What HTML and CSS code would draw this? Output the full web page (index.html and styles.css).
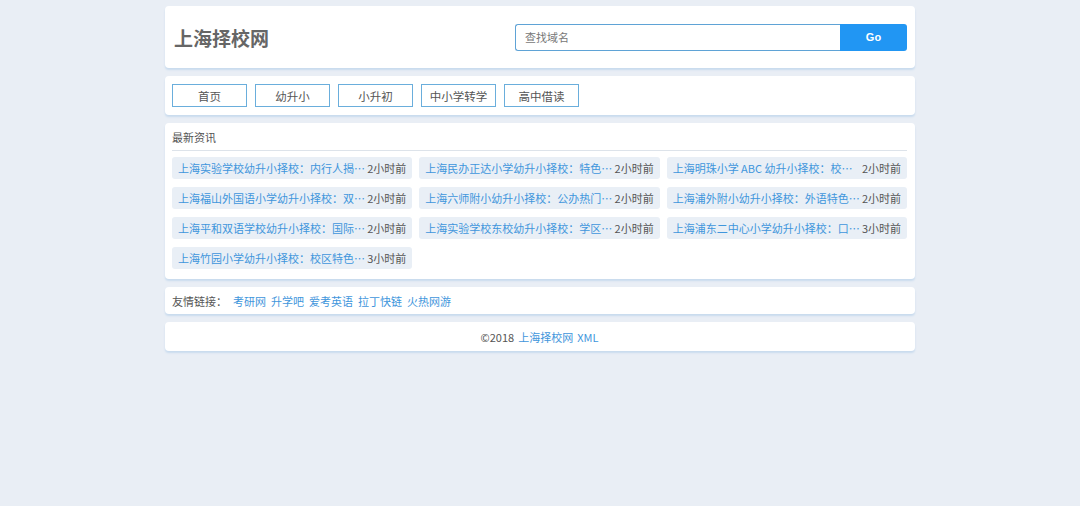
FILE: index.html
```html
<!DOCTYPE html>
<html>
<head>
  <meta charset="utf-8">
  <title>上海择校网</title>
  <link rel="stylesheet" href="styles.css">
</head>
<body>
  <div class="wrap">
    <div class="box header">
      <div class="logo">上海择校网</div>
      <form class="search">
        <input type="text" placeholder="查找域名">
        <button type="button">Go</button>
      </form>
    </div>

    <div class="box nav">
      <a href="#">首页</a>
      <a href="#">幼升小</a>
      <a href="#">小升初</a>
      <a href="#">中小学转学</a>
      <a href="#">高中借读</a>
    </div>

    <div class="box news">
      <div class="news-title">最新资讯</div>
      <div class="news-list">
        <div class="item"><a href="#">上海实验学校幼升小择校：内行人揭…</a><span>2小时前</span></div>
        <div class="item"><a href="#">上海民办正达小学幼升小择校：特色…</a><span>2小时前</span></div>
        <div class="item"><a href="#">上海明珠小学 ABC 幼升小择校：校…</a><span>2小时前</span></div>
        <div class="item"><a href="#">上海福山外国语小学幼升小择校：双…</a><span>2小时前</span></div>
        <div class="item"><a href="#">上海六师附小幼升小择校：公办热门…</a><span>2小时前</span></div>
        <div class="item"><a href="#">上海浦外附小幼升小择校：外语特色…</a><span>2小时前</span></div>
        <div class="item"><a href="#">上海平和双语学校幼升小择校：国际…</a><span>2小时前</span></div>
        <div class="item"><a href="#">上海实验学校东校幼升小择校：学区…</a><span>2小时前</span></div>
        <div class="item"><a href="#">上海浦东二中心小学幼升小择校：口…</a><span>3小时前</span></div>
        <div class="item"><a href="#">上海竹园小学幼升小择校：校区特色…</a><span>3小时前</span></div>
      </div>
    </div>

    <div class="box links">
      <span class="links-label">友情链接：</span>
      <a href="#">考研网</a>
      <a href="#">升学吧</a>
      <a href="#">爱考英语</a>
      <a href="#">拉丁快链</a>
      <a href="#">火热网游</a>
    </div>

    <div class="box footer">
      ©2018 <a href="#">上海择校网</a> <a href="#">XML</a>
    </div>
  </div>
</body>
</html>
```

FILE: styles.css
```css
body {
  background-color: #e9eef5;
  font-family: "Noto Sans CJK SC", "DejaVu Sans", sans-serif;
  font-size: 11px;
  color: #555;
  margin: 0;
  padding: 0;
}

a {
  color: #3f96dc;
  text-decoration: none;
}

.wrap {
  width: 750px;
  margin: 0 auto;
  padding-top: 6px;
}

.box {
  background: #fff;
  border-radius: 4px;
  box-shadow: 0 2px 2px #c9dbee;
  margin-bottom: 8px;
  padding: 0 8px 0 7px;
}

.header {
  height: 62px;
  display: flex;
  align-items: center;
  justify-content: space-between;
}

.logo {
  font-family: "Liberation Serif", "Noto Sans CJK SC", serif;
  font-size: 19px;
  font-weight: bold;
  color: #666;
  padding-left: 2px;
}

.search {
  display: flex;
  margin: 0;
}

.search input {
  width: 325px;
  height: 27px;
  box-sizing: border-box;
  border: 1px solid #5fa3d6;
  border-right: none;
  border-radius: 3px 0 0 3px;
  padding: 0 9px;
  font-family: inherit;
  font-size: 11px;
  color: #555;
  outline: none;
}

.search input::placeholder {
  color: #777;
}

.search button {
  width: 67px;
  height: 27px;
  border: none;
  border-radius: 0 3px 3px 0;
  background-color: #2196f3;
  color: #fff;
  font-family: "Liberation Sans", sans-serif;
  font-size: 11px;
  font-weight: bold;
}

.nav {
  height: 39px;
  display: flex;
  align-items: center;
  gap: 8px;
}

.nav a {
  width: 75px;
  height: 23px;
  box-sizing: border-box;
  border: 1px solid #6aaedc;
  color: #555;
  font-size: 11.5px;
  display: flex;
  align-items: center;
  justify-content: center;
}

.news {
  padding-top: 6px;
  padding-bottom: 10px;
}

.news-title {
  color: #555;
  height: 21px;
  line-height: 17px;
  border-bottom: 1px solid #dde3ea;
  margin-bottom: 6px;
}

.news-list {
  display: grid;
  grid-template-columns: repeat(3, minmax(0, 1fr));
  column-gap: 7px;
  row-gap: 8px;
}

.item {
  background: #e9eff6;
  border-radius: 3px;
  height: 22px;
  display: flex;
  align-items: center;
  justify-content: space-between;
  padding: 0 6px;
  white-space: nowrap;
}

.item span {
  color: #555;
  margin-left: 2px;
}

.links {
  height: 27px;
  display: flex;
  align-items: center;
  gap: 5px;
}

.links-label {
  margin-right: 1px;
}

.footer {
  height: 29px;
  display: flex;
  align-items: center;
  justify-content: center;
  gap: 4px;
}
```
